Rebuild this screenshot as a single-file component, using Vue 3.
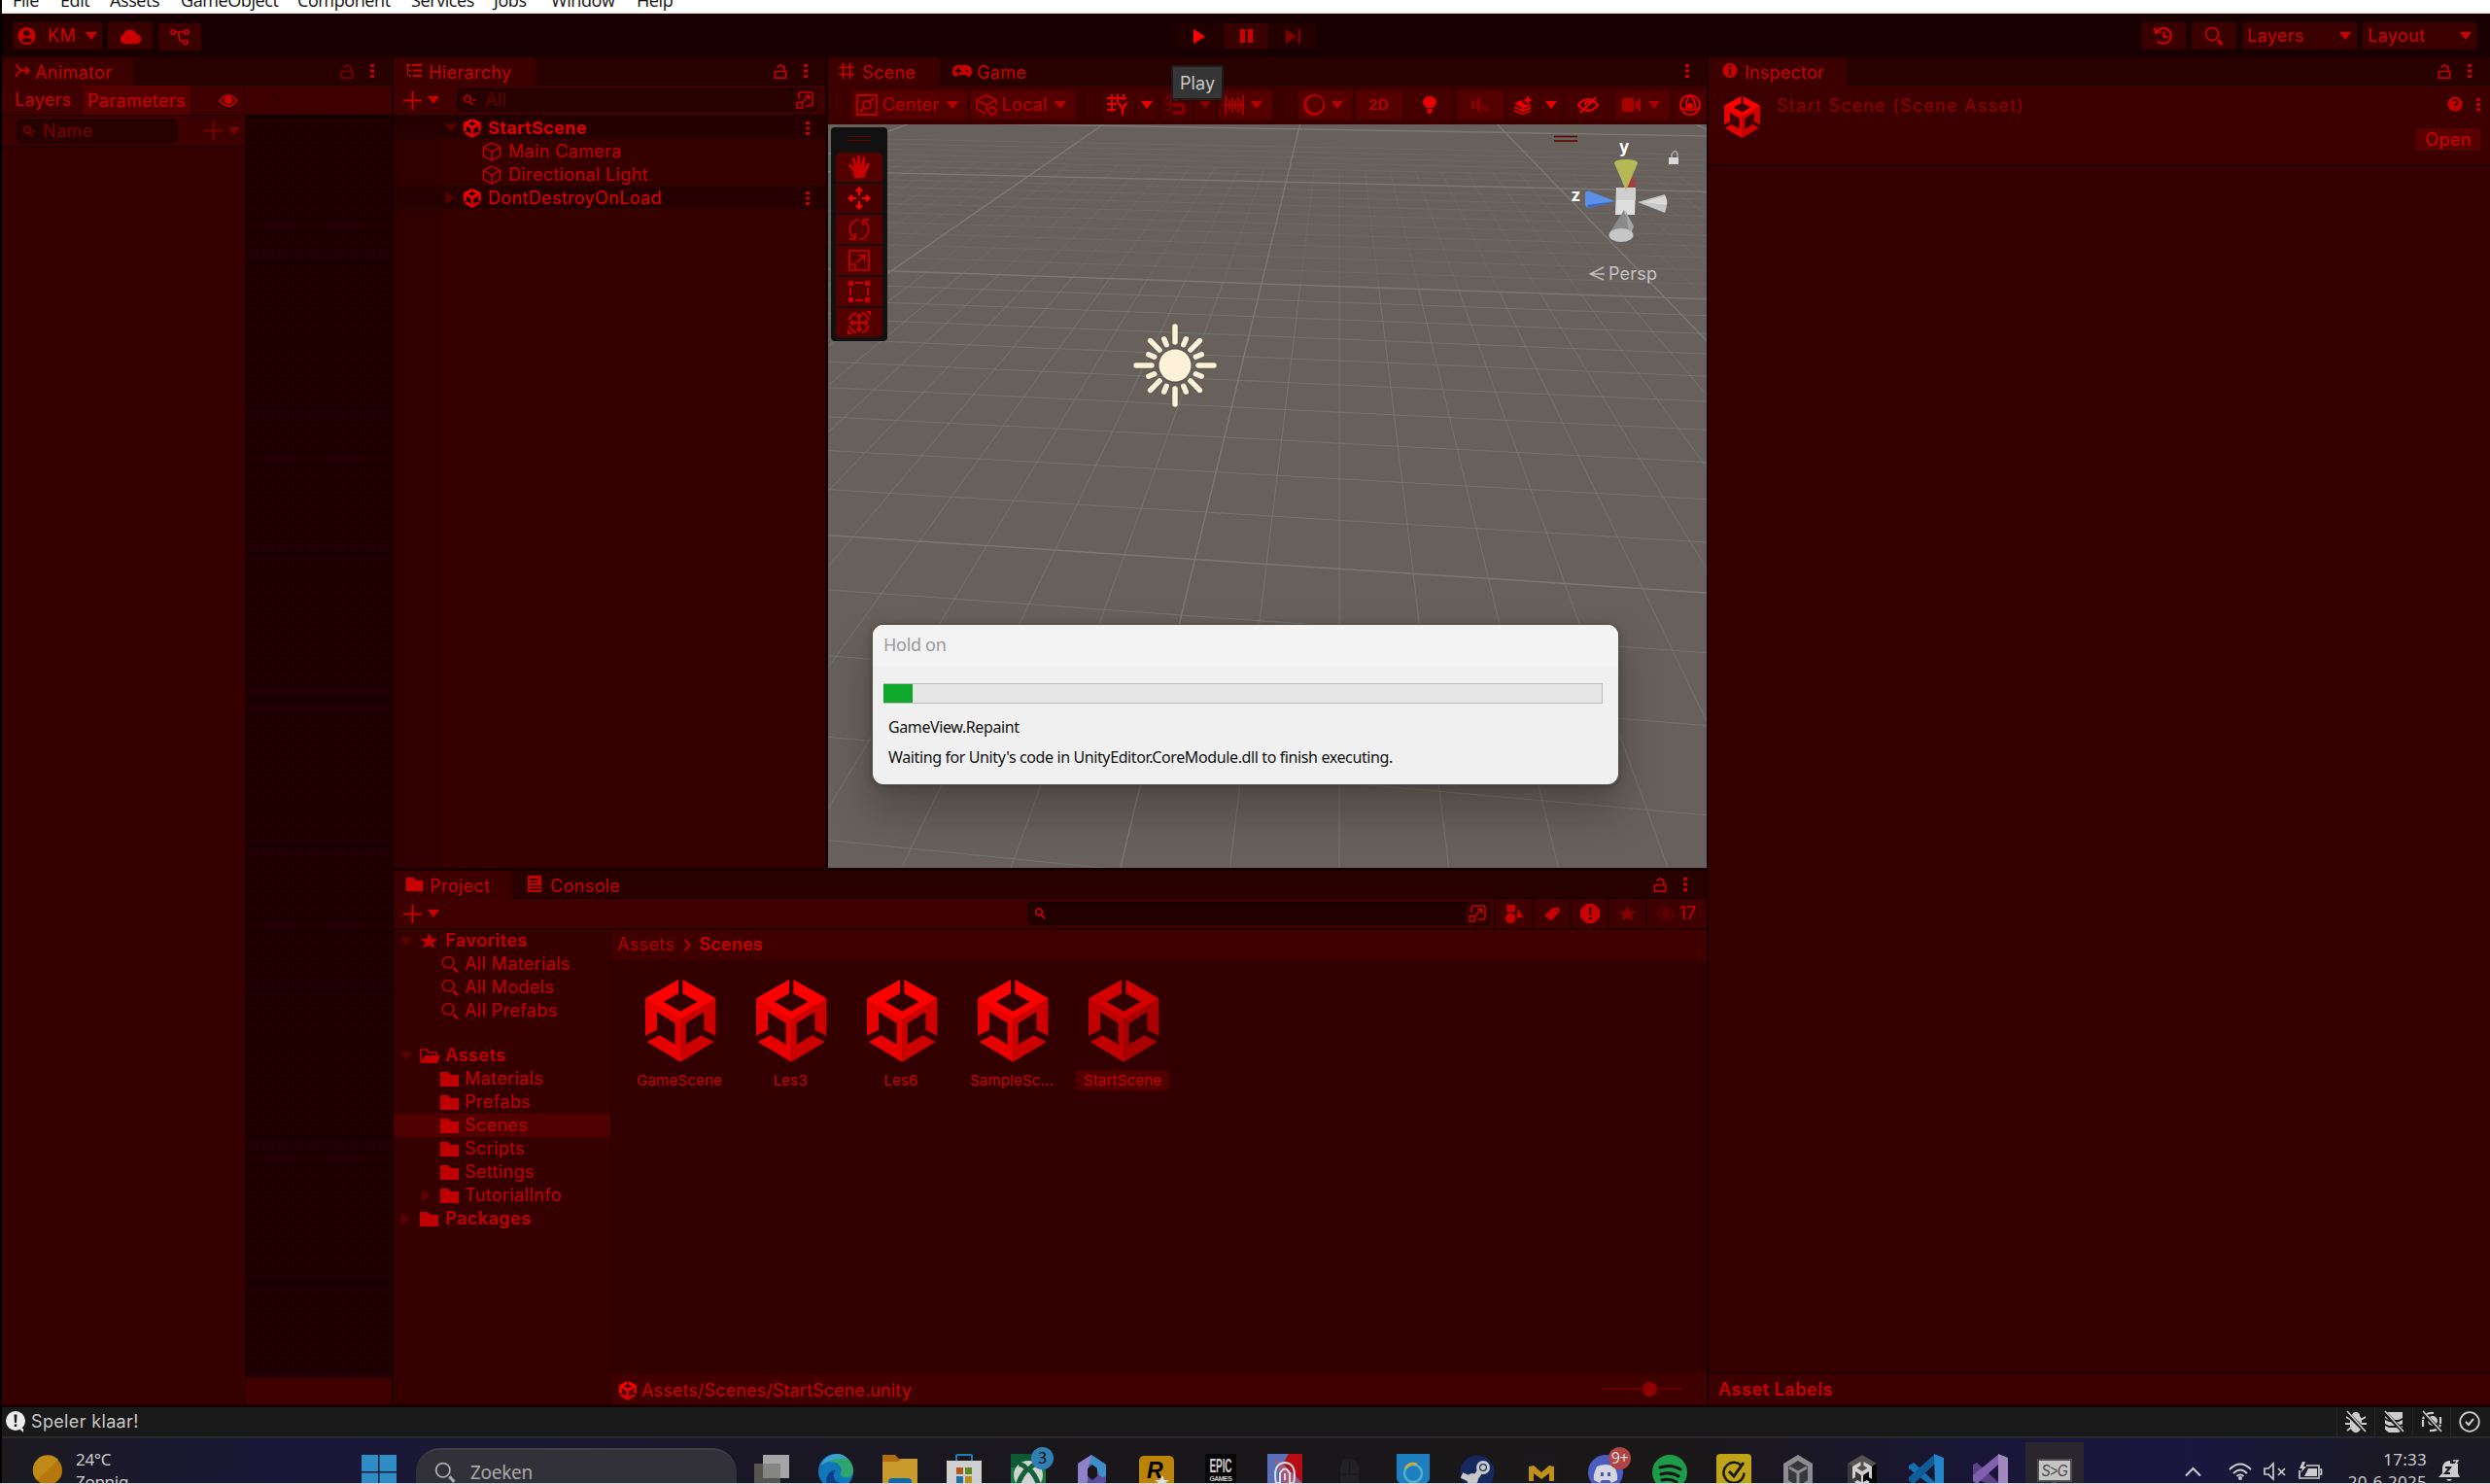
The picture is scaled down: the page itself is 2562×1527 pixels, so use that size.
<script setup>
import { h } from 'vue'

/* name: [viewBox width, viewBox height, markup] */
const S = 'fill="none" stroke="currentColor"'
const F = 'fill="currentColor"'
const icons = {
  arrow: [12, 8, `<path ${F} d="M0 0h12L6 8z"/>`],
  right: [8, 12, `<path ${F} d="M0 0v12l8-6z"/>`],
  user: [20, 20, `<circle ${F} cx="10" cy="10" r="9.5"/><circle cx="10" cy="7" r="3.4" fill="#3c0000"/><path d="M4 15a6.5 4.5 0 0 1 12 0l-3 2H7z" fill="#3c0000"/>`],
  cloud: [22, 16, `<path ${F} d="M5 16a5 5 0 0 1-1-9.6A7 6 0 0 1 17.500 6 5 5 0 0 1 17 16z"/>`],
  branch: [20, 17, `<g ${S} stroke-width="1.6"><circle cx="3" cy="3" r="2.2"/><circle cx="17" cy="3" r="2.200"/><circle cx="16" cy="13.500" r="2.200"/><path d="M5 3h10M9 3c0 6 0 10 5 10"/></g>`],
  history: [20, 20, `<g ${S} stroke-width="2.300"><path d="M3.500 5A8 8 0 1 1 4 15.500"/><path d="M10.500 5.500V11h4"/></g><path ${F} d="M0 1l1 7 7-1z"/>`],
  search: [20, 20, `<circle ${S} stroke-width="1.6" cx="8" cy="8" r="6.500"/><path ${S} stroke-width="3" d="M14 14l4.500 5"/>`],
  find: [14, 12, `<circle ${S} stroke-width="1.7" cx="5" cy="4.500" r="3.300"/><path ${S} stroke-width="2" d="M7 7l4 4"/>`],
  finddd: [16, 12, `<circle ${S} stroke-width="1.7" cx="5" cy="4.500" r="3.300"/><path ${S} stroke-width="2" d="M7 7l3 4"/><path ${F} d="M10 5h4l-2 2.500z"/>`],
  play: [12, 15, `<path ${F} d="M0 0v15l12-7.500z"/>`],
  pause: [13, 14, `<path ${F} d="M0 0h5v14H0zM8 0h5v14H8z"/>`],
  step: [15, 15, `<path ${F} d="M0 0v15l11-7.500zM12.500 0H15v15h-2.500z"/>`],
  anim: [16, 15, `<path ${S} stroke-width="1.800" d="M2 1l1 3 4 3.500h8M1 14l2-3.500 4-3M11 4l4 3.500-4 3.500"/>`],
  lock: [14, 16, `<path ${S} stroke-width="1.800" d="M1 8h12v7H1zM4 4V3l3-2 4 2v5"/>`],
  dots: [4, 16, `<path ${F} d="M0 1h4v3H0zM0 6.500h4v3H0zM0 12h4v3H0z"/>`],
  list: [16, 13, `<path ${F} d="M0 0h4v2H0zM6 0h10v2H6zM3 5.500h2v2H3zM7 5.500h9v2H7zM3 11h2v2H3zM7 11h9v2H7zM1 2h1v10H1z"/>`],
  plus: [19, 19, `<path ${F} d="M8.500 0h2v8.500H19v2h-8.500V19h-2v-8.500H0v-2h8.500z"/>`],
  eye: [20, 13, `<path ${S} stroke-width="1.600" d="M1 6.500q9-11.500 18 0q-9 11.500-18 0z"/><circle ${F} cx="10" cy="6" r="4.300"/>`],
  pick: [18, 18, `<path ${S} stroke-width="1.500" d="M3 8V3q0-2 2-2h10q2 0 2 2v10q0 2-2 2h-5M1 11.500h5.500V17H1zM7 11l6-6M9 4.500h4.500V9"/>`],
  cube: [20, 20, `<path ${S} stroke-width="1.400" d="M10 1l8.500 4.500v9L10 19l-8.500-4.500v-9zM1.500 5.500L10 10l8.500-4.500M10 10v9"/>`],
  hash: [16, 16, `<path ${S} stroke-width="1.700" d="M4.500 0v16M11.500 0v16M0 4.500h16M0 11.500h16"/>`],
  pad: [20, 12, `<path fill-rule="evenodd" ${F} d="M5 0h10a5 6 0 0 1 5 6c0 7-4 7-6 4H6c-2 3-6 3-6-4a5 6 0 0 1 5-6zM5 3v2H3v2h2v2h2V7h2V5H7V3zM14 5v2h2V5z"/>`],
  center: [22, 22, `<g ${S} stroke-width="1.800"><path d="M1 1h20v20H1zM4 18l4-4M14 8l4-4"/><circle cx="11" cy="11" r="4"/></g>`],
  local: [22, 22, `<g ${S} stroke-width="1.600"><path d="M10 20l-9-5V6l10-5 10 5v5M1 6l10 5 10-5M11 11v6"/><circle cx="17" cy="17" r="3.800" stroke-width="2"/></g>`],
  gridy: [22, 22, `<path ${S} stroke-width="1.800" d="M5 0v18M11 0v9M17 0v6M0 4h20M0 10h10M0 16h9"/><path ${S} stroke-width="2.500" d="M12 9l4 6 4-6M16 15v6"/>`],
  snap: [22, 22, `<path ${S} stroke-width="1.500" stroke-dasharray="4 2" d="M5 0v18M11 0v8M17 0v6M0 4h20M0 10h8M0 16h6"/><path ${S} stroke-width="4" d="M8 11h8q3 0 3 4t-3 4H8"/>`],
  ruler: [20, 20, `<path ${S} stroke-width="1.500" d="M1 0v20M5 5v10M8 2v16M11 5v10M14 2v16M16.500 5v10M19 0v20M0 10h20"/>`],
  sphere: [22, 22, `<path fill-rule="evenodd" ${F} d="M11 0a11 11 0 1 0 .1 0zM12 1.800a8.500 8.500 0 1 1-.1 0z"/>`],
  bulb: [14, 18, `<path ${F} d="M4 12Q0 9 0 6a7 6 0 0 1 14 0q0 3-4 6zM4.500 13h5v4l-2.500 1-2.500-1z"/>`],
  mute: [18, 16, `<path ${F} d="M0 4h3v8H0zM5 3l4-3v16l-4-4z"/><path ${S} stroke-width="1.500" d="M11 8l6 7M17 8l-6 7"/>`],
  fx: [20, 20, `<path ${F} d="M15 0l1.500 3.500L20 5l-3.500 1.500L15 10l-1.500-3.500L10 5l3.500-1.500zM1 8l8-3 2 4 8 1-9 4zM1 11l9 4 8-3v2l-8 3.500L1 13zM1 15l9 3.500 8-3v1.500L10 20 1 17z"/>`],
  hide: [22, 18, `<path ${S} stroke-width="2" d="M1 9q10-12 20 0q-10 12-20 0zM3 17L19 1M8 9a3 3 0 0 1 6-1"/>`],
  cam: [20, 14, `<path ${F} d="M0 0h12v14H0zM13.500 4L19 0v14l-5.500-4z"/>`],
  globe: [22, 22, `<g ${S} stroke-width="1.700"><circle cx="11" cy="11" r="10"/><path d="M11 1q-5 5-4 14M11 1q6 5 5 14M1 14q10 5 20 0"/></g><circle ${F} cx="11" cy="12" r="3"/>`],
  info: [18, 18, `<circle ${F} cx="9" cy="9" r="8.500"/><path d="M7.800 3h2.500v2.500H7.800zM7 7.500h3.300V15H7.800V9H7z" fill="#3c0000"/>`],
  help: [16, 16, `<circle ${F} cx="8" cy="8" r="7.500"/><path d="M5.500 6a2.500 2.500 0 1 1 3.500 2.500q-1 .5-1 1.500M8 11.500v2" fill="none" stroke="#3c0000" stroke-width="1.800"/>`],
  folder: [19, 15, `<path ${F} d="M1 0h7l3 3h7q1 0 1 1v10q0 1-1 1H1q-1 0-1-1V1q0-1 1-1z"/>`],
  folderopen: [21, 15, `<path ${S} stroke-width="1.600" d="M1 14V1h6l2.500 3H17v3"/><path ${F} d="M5 7h16l-3 8H1z"/>`],
  doc: [16, 17, `<path fill-rule="evenodd" ${F} d="M1 0h14v17H1zM3 3v1.500h9V3zm0 3.500V8h8V6.500zM3 10v1.500h11V10zm0 3.500V15h11v-1.500z"/>`],
  star: [19, 17, `<path ${F} d="M9.500 0l2.700 6H19l-5.200 4.500 2 6.500-6.300-4-6.300 4 2-6.500L0 6h6.800z"/>`],
  shapes: [20, 20, `<path ${F} d="M2 0h9v8H2zM14 4l6 10h-7z"/><circle ${F} cx="6" cy="14.500" r="5.500"/>`],
  tag: [18, 16, `<path fill-rule="evenodd" ${F} d="M9 1l8-1 1 5-10 11-8-6zM13 3v2h2V3z"/>`],
  alert: [20, 20, `<path ${F} d="M6 0h8l6 6v8l-6 6H6l-6-6V6z"/><path fill="#280000" d="M9 3.500h2.500L11 12H9.500zM9 14h2.500v2.500H9z"/>`],
  bubble: [20, 22, `<path ${F} d="M10 0a10 10 0 1 1 0 20 10 10 0 0 1 0-20zM13 17l5 1v4z"/><path fill="#191919" d="M8.500 3.500h3L11 12H9zM8.700 13.500h2.600V16H8.700z"/>`],
  chev: [8, 13, `<path ${S} stroke-width="2" d="M1 1l5 5.500L1 12"/>`],
  hand: [22, 24, `<path ${F} d="M6 23L5 17 0 10q1-2 3 0l3 3L4 3q1-2 2.500 0L9 10V1q1.500-2 3 0l.5 9L15 2q1.500-1.500 2.500.5L16 12l4-4q2-1 2 .5L18 18l-2 5z"/>`],
  move: [24, 24, `<path ${S} stroke-width="2" d="M12 9V2M9 5l3-3.500L15 5M12 15v7M9 19l3 3.500 3-3.500M9 12H2M5 9l-3.500 3L5 15M15 12h7M19 9l3.500 3-3.500 3"/>`],
  rotate: [22, 22, `<path ${S} stroke-width="1.600" d="M7 20A10 10 0 0 1 11 1M11 21A10 10 0 0 0 16 2.500M1 21h6v-6M21 1h-6v6"/>`],
  scale: [22, 22, `<path ${S} stroke-width="1.700" d="M1 1h20v20H1zM1 15h6v6M9 13l7-7M10 5.500h6.500V12"/>`],
  rect: [22, 22, `<path ${F} d="M0 0h5v5H0zM17 0h5v5h-5zM0 17h5v5H0zM17 17h5v5h-5zM7 1h8v2H7zM7 19h8v2H7zM1 7h2v8H1zM19 7h2v8h-2z"/>`],
  combo: [24, 24, `<path ${S} stroke-width="1.800" d="M12 4v16M4 12h16M9.500 6L12 3.500 14.500 6M9.500 18l2.500 2.500 2.500-2.500M6 9.500L3.500 12 6 14.500M18 9.500l2.500 2.500-2.500 2.500M2 9q2-6 7-7M15 2q5 1 7 7M22 15q-2 6-7 7M9 22q-5-1-7-7"/><path ${F} d="M19 0h5v5zM0 19v5h5z"/>`],
  bug: [22, 22, `<path ${F} d="M7 5a4 4 0 0 1 8 0l2 3v8q-2 6-6 6t-6-6V8z"/><path ${S} stroke-width="2" d="M1 6l5 3M21 6l-5 3M0 13h22M2 20l4-3M20 20l-4-3"/><path d="M1 1l20 20" stroke="#191919" stroke-width="4"/><path ${S} stroke-width="1.600" d="M2 0l19 21"/>`],
  stack: [22, 22, `<path ${F} d="M2 1h18v6l-4 2H6L2 7zM2 9l4 2h10l4-2v4l-4 2H6l-4-2zM2 15l4 2h10l4-2v4l-4 3H6l-4-3z"/><path d="M1 1l20 20" stroke="#191919" stroke-width="4"/><path ${S} stroke-width="1.600" d="M2 0l19 21"/>`],
  auto: [22, 22, `<path ${S} stroke-width="2.200" d="M2 8q3-7 11-6M20 14q-3 7-11 6M2 16V9M20 6v7"/><circle ${F} cx="12" cy="10" r="5"/><path d="M1 1l20 20" stroke="#191919" stroke-width="4"/><path ${S} stroke-width="1.600" d="M2 0l19 21"/>`],
  ok: [22, 22, `<circle ${S} stroke-width="1.800" cx="11" cy="11" r="9.800"/><path ${S} stroke-width="2" d="M7 11l3 3 5-6"/>`],
  /* taskbar */
  weather: [32, 32, `<circle cx="16" cy="16" r="15" fill="#b8770c"/><path d="M5 26A15 15 0 0 1 27 5z" fill="#c08a18"/>`],
  win: [36, 36, `<path fill="#2f8cc4" d="M0 0h17v17H0zM18.500 0H36v17H18.500zM0 18.500h17V36H0zM18.500 18.500H36V36H18.500z"/>`],
  views: [36, 34, `<path fill="#a5a5a5" d="M9 1h27v24H9z"/><path fill="#55544f" d="M0 10h27v24H0z"/><path fill="#858583" d="M9 10h18v15H9z"/>`],
  edge: [36, 36, `<circle cx="18" cy="18" r="18" fill="#1277b8"/><path fill="#2ea56f" d="M18 0a18 18 0 0 1 18 18q-1 8-10 6q-6-2-2-7-1-9-13-9z"/><path fill="#3d9fd0" d="M2 12Q8 0 20 0q8 1 10 6Q20 2 10 8z"/><path fill="#0b3f86" d="M10 36Q4 20 18 16q-6 10 4 14l6 6z"/>`],
  files: [36, 34, `<path fill="#b36a10" d="M0 1h13l4 4h19v10H0z"/><path fill="#c99a2c" d="M0 8h16l4-3h16v29H0z"/><path fill="#0d6aa8" d="M6 34v-5q0-4 4-4h16q4 0 4 4v5z"/>`],
  store: [36, 36, `<path d="M10 8V2q0-1 1-1h14q1 0 1 1v6" fill="none" stroke="#1b80b8" stroke-width="2"/><path fill="#cfcfcf" d="M0 7h36v29H0z"/><path fill="#b5561c" d="M10 14h7v7h-7z"/><path fill="#5e8a24" d="M19 14h7v7h-7z"/><path fill="#1b72a8" d="M10 23h7v7h-7z"/><path fill="#c28c14" d="M19 23h7v7h-7z"/>`],
  xbox: [36, 36, `<path fill="#0d5a34" d="M0 0h36v36H0z"/><path fill="#1b7a40" d="M0 14h36v22H0z"/><circle cx="18" cy="22" r="15" fill="#d0d4d0"/><path d="M6 36Q10 22 17 16 12 10 8 11M30 36Q26 22 19 16q4-6 9-5" fill="none" stroke="#14603a" stroke-width="5"/>`],
  copilot: [36, 36, `<path fill="#5b4d9c" d="M3 10L17 1l15 10v18L18 36 3 30z"/><path fill="#3c8fc8" d="M17 1l15 10v12q-6 3-8-4L13 8z"/><path fill="#8f82c8" d="M3 10L17 1l-3 13-1 14-3 7-7-5z"/><path d="M18 11l5 4v8l-5 4-5-4v-8z" fill="#1a1719"/>`],
  rock: [36, 36, `<rect width="36" height="44" y="2" rx="5" fill="#b98409"/><text x="8" y="25" font-family="Liberation Sans" font-style="italic" font-weight="700" font-size="23">R</text><path fill="#ddd" d="M24 22l2 5h5l-4 3 2 6-5-3-5 3 1-6-4-3h5z"/>`],
  epic: [36, 36, `<path fill="#050505" d="M2 0h32v36H2z"/><text x="18" y="19" text-anchor="middle" fill="#ccc" font-family="Liberation Sans" font-weight="700" font-size="20" textLength="23" lengthAdjust="spacingAndGlyphs">EPIC</text><text x="18" y="28" text-anchor="middle" fill="#ccc" font-family="Liberation Sans" font-weight="700" font-size="7" textLength="23">GAMES</text>`],
  print: [36, 36, `<path fill="#5b6eb8" d="M0 0h36v36H0z"/><path fill="#b80c14" d="M22 0h14v30L16 10z"/><path fill="#a85878" d="M8 4l28 28v4H18z"/><g fill="none" stroke="#ddd" stroke-width="2"><path d="M9 30q-4-20 9-21 13 1 9 21M13 30V20q5-9 10 0v10M18 20v7M9 30h5M22 30h5"/></g>`],
  mouse: [36, 36, `<rect x="9" y="5" width="19" height="40" rx="9" fill="#222125"/><path d="M18.500 5v16M9 21h19" stroke="#19181b"/>`],
  shield: [36, 36, `<path fill="#1d7fc0" d="M1 0h34v26q-4 8-17 12Q5 34 1 26z"/><circle cx="18" cy="20" r="9" fill="none" stroke="#55b0c8" stroke-width="2.500"/><path d="M10 15q4-7 12-4" fill="none" stroke="#d4a83a" stroke-width="2.500"/>`],
  steam: [36, 36, `<circle cx="18" cy="19" r="17.500" fill="#142a5e"/><path d="M23 14L18 22l-5 5L2 22" fill="none" stroke="#c8c8c8" stroke-width="6"/><g fill="#c8c8c8"><circle cx="24" cy="14" r="7"/><circle cx="13" cy="26" r="6"/></g><circle cx="24" cy="14" r="4" fill="#142a5e"/><circle cx="24" cy="14" r="2.800" fill="#c8c8c8"/>`],
  mail: [36, 36, `<rect width="36" height="44" rx="6" fill="#19181a"/><path fill="#c0901c" d="M5 28V13l5-1 8 7 8-7 5 1v15h-5v-8l-8 6-8-6v8z"/>`],
  discord: [36, 36, `<circle cx="18" cy="19" r="18" fill="#4a5cc0"/><path fill="#d5d5df" fill-rule="evenodd" d="M9 13q9-4 18 0 4 8 3 14l-6 3-2-3h-8l-2 3-6-3q-1-6 3-14zM13 19v4h3v-4zM20 19v4h3v-4z"/>`],
  spotify: [36, 36, `<circle cx="18" cy="19" r="18" fill="#1c9c46"/><g fill="none" stroke="#151515" stroke-width="3" stroke-linecap="round"><path d="M8 14q12-4 21 2M9 21q10-3 18 2M10 27q8-2 15 2"/></g>`],
  norton: [36, 36, `<rect width="36" height="44" rx="4" fill="#c0a418"/><path d="M25 11.500a10.500 10.500 0 1 0 3.500 8" fill="none" stroke="#18170f" stroke-width="2.500"/><path d="M13 18l5 5L28 9" fill="none" stroke="#18170f" stroke-width="3"/>`],
  hub: [36, 36, `<path fill="#8c8c90" d="M18 1l15 9v22l-15 9-15-9V10z"/><path fill="#39383c" d="M18 7l10 6v14l-10 7-10-7V13z"/><path fill="none" stroke="#8c8c90" stroke-width="3" d="M9 14l9 5 9-5M18 19v14"/>`],
  unitydark: [36, 36, `<path fill="#55524f" d="M18 1l15 9-15 9-15-9z"/><path fill="#3c3a3a" d="M3 10l15 9v22L3 32z"/><path fill="#050505" d="M33 10l-15 9v22l15-9z"/><path fill="#d0d0d0" fill-rule="evenodd" d="M16.500 8L8 13v13l3-2v-6l6 4v7l-4-2-3 2 8 5 8-5-3-2-4 2v-7l6-4v6l3 2V13l-8.500-5v4l4 2.500L18 18l-5.500-3.500 4-2.500z"/>`],
  vscode: [36, 36, `<path fill="#1471b0" d="M0 12l5-3 22 20v7L0 15z"/><path fill="#0e5c98" d="M0 28l5 3L27 10V0L0 24z"/><path fill="#2484c8" d="M26 0l10 4v32H27z"/>`],
  vs: [36, 36, `<path fill="#5c4384" d="M0 11l4-2 22 20v7L0 24z"/><path fill="#8160ae" d="M0 28l4 3L27 10V0L0 22z"/><path fill="#a088bc" d="M26 0l10 4v32H26z"/>`],
  sg: [36, 32, `<path fill="#4d4d4f" d="M0 2h36v24H0zM15 26h5v6h-5zM12 30h12v2H12z"/><path fill="#c4c4c4" d="M2 4h32v20H2z"/><text x="18" y="20" text-anchor="middle" font-family="Liberation Sans" font-style="italic" font-size="16" fill="#444" textLength="27" lengthAdjust="spacingAndGlyphs">S&gt;G</text>`],
  up: [17, 9, `<path ${S} stroke-width="2" d="M1 8.500l7.500-7.500L16 8.500"/>`],
  wifi: [24, 18, `<g ${S} stroke-width="2"><path d="M1 7q11-11 22 0M5 11q7-7 14 0M8.500 14q3.500-3 7 0"/></g><circle ${F} cx="12" cy="16" r="2"/>`],
  vol: [24, 18, `<path ${S} stroke-width="1.700" d="M1 6h4l5-5v16l-5-5H1zM15 6l7 7M22 6l-7 7"/>`],
  batt: [24, 20, `<path ${S} stroke-width="1.700" d="M8 4h13v13H1v-8M22 8h1.500v5H22"/><path ${F} d="M10 7h9v8H6zM4 0L1 7h3l-2 5 6-7H5l2-5z"/>`],
  bell: [22, 24, `<path ${F} d="M4 8q1-7 8-7v3h8v10l2 4H0l4-4zM8 20h6q-3 4-6 0z"/><path d="M7 8h5l-5 6h5" fill="none" stroke="#18152a" stroke-width="2"/><path ${S} stroke-width="1.500" d="M15 1h5l-5 6h5"/>`],
}
const Icon = ({ n, w, h: ht }) => {
  const [vw, vh, html] = icons[n]
  return h('svg', { viewBox: `0 0 ${vw} ${vh}`, width: w || vw, height: ht || vh, class: 'ico', innerHTML: html })
}
Icon.props = ['n', 'w', 'h']

const Unity = ({ w = 72.4, hgt = 84.7, dim }) =>
  h('svg', {
    viewBox: '0 0 72.4 84.7', width: w, height: hgt, preserveAspectRatio: 'none', class: 'ico',
    innerHTML:
      `<path fill="${dim ? '#be0000' : '#e60000'}" d="M0 19.300V57.700L12 51.700V33.300L30.700 45V66.700L14.800 57.300 1.600 64 36.200 84.700V36z"/>` +
      `<path fill="${dim ? '#a80000' : '#cd0000'}" d="M72.400 19.300V57.700L60.400 51.700V33.300L41.700 45V66.700L57.600 57.300 70.800 64 36.200 84.700V36z"/>` +
      `<path fill="${dim ? '#d20000' : '#ff0000'}" d="M34 0L0 19.300 36.200 40.500 72.400 19.300 38.400 0V14.300L53.700 22.700 36.200 32.700 18.700 22.700 34 14.300z"/>`,
  })
Unity.props = ['w', 'hgt', 'dim']

const menus = ['File', 'Edit', 'Assets', 'GameObject', 'Component', 'Services', 'Jobs', 'Window', 'Help']
const tools = ['hand', 'move', 'rotate', 'scale', 'rect', 'combo']
const favorites = ['All Materials', 'All Models', 'All Prefabs']
const folders = ['Materials', 'Prefabs', 'Scenes', 'Scripts', 'Settings', 'TutorialInfo']
const scenes = ['GameScene', 'Les3', 'Les6', 'SampleSc...', 'StartScene']
const apps = ['views', 'edge', 'files', 'store', 'xbox', 'copilot', 'rock', 'epic', 'print', 'mouse', 'shield',
  'steam', 'mail', 'discord', 'spotify', 'norton', 'hub', 'unitydark', 'vscode', 'vs', 'sg']
const badges = { xbox: '3', discord: '9+' }

/* ground plane grid: (i, j) in units of ten cells -> viewport pixels */
const project = (i, j) => {
  const d = 1 - 0.0427 * i - 0.4606 * j
  return [((378.2 * i - 243.3 * j + 448) / d - 2).toFixed(1), ((6.56 * i + 76 * j + 167) / d - 3).toFixed(1)]
}
const seg = (a, b) => `M${project(...a)}L${project(...b)}`
const major = [], far = [], near = []
for (let k = -50; k <= 50; k++) {
  const t = k / 10
  const isMajor = k % 10 === 0
  if (isMajor) major.push(seg([t, -3], [t, 1.5]))
  else { far.push(seg([t, -1.2], [t, 0])); near.push(seg([t, 0], [t, 1.5])) }
  if (k >= -30 && k <= 15) {
    if (isMajor) major.push(seg([-5, t], [5, t]))
    else if (k > 0) near.push(seg([-5, t], [5, t]))
    else if (k > -17) far.push(seg([-5, t], [5, t]))
  }
}
const rays = Array.from({ length: 16 }, (_, k) => ({ a: k * 22.5, y1: k % 4 === 0 ? -40 : k % 2 === 0 ? -36 : -29.500, y2: k % 4 === 0 ? -24 : k % 2 === 0 ? -22.500 : -23 }))
</script>

<template>
  <div class="screen">
    <nav class="menubar"><span v-for="(m, k) in menus" :key="m" :class="'m' + k">{{ m }}</span></nav>

    <header class="toolbar">
      <div class="btn km"><Icon n="user" w="19" /><span>KM</span><Icon n="arrow" /></div>
      <div class="btn cl"><Icon n="cloud" /></div>
      <div class="btn vc"><Icon n="branch" /></div>
      <div class="btn pl"><Icon n="play" /></div>
      <div class="btn pa"><Icon n="pause" /></div>
      <div class="btn st"><Icon n="step" /></div>
      <div class="btn hi"><Icon n="history" /></div>
      <div class="btn se"><Icon n="search" /></div>
      <div class="btn dd"><span>Layers</span><Icon n="arrow" /></div>
      <div class="btn dd"><span>Layout</span><Icon n="arrow" /></div>
    </header>

    <main class="work">
      <section class="panel animator">
        <div class="tabs">
          <div class="tab"><Icon n="anim" /><span>Animator</span></div>
          <div class="ctl faint"><Icon n="lock" h="15" /></div><div class="ctl"><Icon n="dots" /></div>
        </div>
        <div class="bar anibar">
          <span class="lay">Layers</span><span class="par">Parameters</span>
          <span class="eye"><Icon n="eye" /></span>
          <span class="crumb"><svg width="40" height="30" viewBox="0 0 40 30"><path d="M22 0l13 15-13 15" fill="none" stroke="#2c0000" stroke-width="1.500" /></svg></span>
        </div>
        <div class="anibody">
          <div class="anileft">
            <div class="namerow"><div class="field"><Icon n="finddd" /><span>Name</span></div><Icon n="plus" /><Icon n="arrow" /></div>
          </div>
          <div class="aniright"><div class="grid"></div><div class="gridfoot"></div></div>
        </div>
      </section>

      <div class="middle">
        <div class="upper">
          <section class="panel hierarchy">
            <div class="tabs">
              <div class="tab"><Icon n="list" /><span>Hierarchy</span></div>
              <div class="ctl"><Icon n="lock" h="15" /></div><div class="ctl"><Icon n="dots" /></div>
            </div>
            <div class="bar hibar">
              <Icon n="plus" /><Icon n="arrow" />
              <div class="field"><Icon n="finddd" /><span>All</span><b><Icon n="pick" /></b></div>
            </div>
            <div class="tree">
              <div class="row scene"><i><Icon n="arrow" h="11" /></i><Unity w="18" hgt="20" /><b>StartScene</b><Icon n="dots" /></div>
              <div class="row obj"><Icon n="cube" /><span>Main Camera</span></div>
              <div class="row obj"><Icon n="cube" /><span>Directional Light</span></div>
              <div class="row scene"><i><Icon n="right" w="10" h="13" /></i><Unity w="18" hgt="20" /><span>DontDestroyOnLoad</span><Icon n="dots" /></div>
            </div>
          </section>

          <section class="panel sceneview">
            <div class="tabs">
              <div class="tab"><Icon n="hash" /><span>Scene</span></div>
              <div class="tab idle"><Icon n="pad" /><span>Game</span></div>
              <div class="ctl last"><Icon n="dots" /></div>
            </div>
            <div class="bar scbar">
              <u></u>
              <div class="tb w119"><Icon n="center" /><span>Center</span><Icon n="arrow" /></div>
              <div class="tb w107"><Icon n="local" /><span>Local</span><Icon n="arrow" /></div>
              <u class="u2"></u>
              <div class="tb on w33"><Icon n="gridy" /></div>
              <div class="tb on w20"><Icon n="arrow" /></div>
              <div class="tb on dim w33"><Icon n="snap" /></div>
              <div class="tb on dim w20"><Icon n="arrow" /></div>
              <div class="tb w55"><Icon n="ruler" /><Icon n="arrow" /></div>
              <u class="u3"></u>
              <div class="tb w55"><Icon n="sphere" /><Icon n="arrow" /></div>
              <div class="tb w48"><span class="two">2D</span></div>
              <div class="tb on w48"><Icon n="bulb" /></div>
              <div class="tb mute w48"><Icon n="mute" /></div>
              <div class="tb on w32"><Icon n="fx" /></div>
              <div class="tb on w21"><Icon n="arrow" /></div>
              <div class="tb on w47"><Icon n="hide" /></div>
              <div class="tb cam w56"><Icon n="cam" /><Icon n="arrow" /></div>
              <div class="tb on globe"><Icon n="globe" /></div>
            </div>
            <div class="viewport">
              <svg class="ground" width="904" height="765" viewBox="0 0 904 765">
                <g fill="none" stroke="#777b7c">
                  <path :d="far.join('')" opacity=".32" />
                  <path :d="near.join('')" opacity=".75" />
                  <path :d="major.join('')" stroke="#7d7c7b" stroke-width="1.500" opacity=".85" />
                </g>
                <g transform="translate(357 248)">
                  <circle r="18" fill="#575048" opacity=".5" />
                  <g stroke="#555049" stroke-width="7.500" stroke-linecap="round" opacity=".4"><line v-for="r in rays" :key="r.a" :y1="r.y1" :y2="r.y2" :transform="`rotate(${r.a})`" /></g>
                  <circle r="16.500" fill="#fdf2d8" />
                  <g stroke="#fdf2d8" stroke-width="5.500" stroke-linecap="round"><line v-for="r in rays" :key="r.a" :y1="r.y1" :y2="r.y2" :transform="`rotate(${r.a})`" /></g>
                </g>
                <g transform="translate(708 -8)">
                  <path d="M39 20.500h24M39 25h24" stroke="#5a0000" stroke-width="1.500" />
                  <path d="M160 42v-3q4-7 6 0v4" fill="none" stroke="#aaa" stroke-width="1.500" /><path d="M157 42h10v7h-10z" fill="#d8d8d8" />
                  <ellipse cx="118" cy="68" rx="5" ry="6" fill="#a63d3d" />
                  <path d="M103 73h20l-1 28h-20z" fill="#dedede" /><path d="M104 73h19v13h-20z" fill="#cfcfcf" />
                  <path d="M101 48q0-4 12-4t12 4l-12 28z" fill="#b5b856" />
                  <path d="M71 78q1-2 5-1l26 10-27 7q-3 0-4-3z" fill="#5a90e8" /><path d="M73 91l29-4-27 7z" fill="#3d68c0" />
                  <path d="M125 88l28-8q4 8 0 19z" fill="#c6c6c6" /><path d="M130 88l23-6q3 4 2 9z" fill="#dadada" />
                  <path d="M111 96l-15 24 24 4z" fill="#8a8a8a" /><path d="M112 96l9 17-4 10z" fill="#a5a5a5" />
                  <ellipse cx="108" cy="122" rx="12.500" ry="7" fill="#c6c6c6" />
                  <path d="M90 155l-14 7 14 6M76 162h15" fill="none" stroke="#bdbdbd" stroke-width="1.400" />
                  <text x="106" y="37" class="ax">y</text><text x="56.500" y="87" class="ax">z</text>
                  <text x="95" y="168" class="persp">Persp</text>
                </g>
              </svg>
              <div class="tools"><s></s><div v-for="t in tools" :key="t" class="tool" :class="'t-' + t"><Icon :n="t" /></div></div>
            </div>
          </section>
        </div>

        <section class="panel project">
          <div class="tabs">
            <div class="tab"><Icon n="folder" h="14" /><span>Project</span></div>
            <div class="tab idle"><Icon n="doc" /><span>Console</span></div>
            <div class="ctl last2"><Icon n="lock" h="15" /></div><div class="ctl"><Icon n="dots" /></div>
          </div>
          <div class="bar prbar">
            <Icon n="plus" /><Icon n="arrow" />
            <div class="field"><Icon n="find" /><b><Icon n="pick" /></b></div>
            <div class="cell c1"><Icon n="shapes" h="19" /></div>
            <div class="cell"><Icon n="tag" w="16" h="15" /></div>
            <div class="cell"><Icon n="alert" /></div>
            <div class="cell dim"><Icon n="star" h="16" /></div>
            <div class="cell c5"><Icon n="eye" /><span>17</span></div>
          </div>
          <div class="prbody">
            <aside>
              <div class="node l0"><i><Icon n="arrow" h="11" /></i><em><Icon n="star" h="16" /></em><b>Favorites</b></div>
              <div v-for="f in favorites" :key="f" class="node l1"><i></i><em><Icon n="search" h="18" /></em>{{ f }}</div>
              <div class="node l0 gap"><i><Icon n="arrow" h="11" /></i><em><Icon n="folderopen" /></em><b>Assets</b></div>
              <div v-for="f in folders" :key="f" class="node l1" :class="{ sel: f === 'Scenes' }"><i><Icon v-if="f === 'TutorialInfo'" n="right" w="10" h="13" /></i><em><Icon n="folder" /></em>{{ f }}</div>
              <div class="node l0"><i><Icon n="right" w="10" h="13" /></i><em><Icon n="folder" /></em><b>Packages</b></div>
            </aside>
            <div class="content">
              <div class="path"><span>Assets</span><Icon n="chev" w="9" /><b>Scenes</b></div>
              <div class="assets">
                <div v-for="s in scenes" :key="s" class="asset" :class="{ sel: s === 'StartScene' }"><Unity :dim="s === 'StartScene'" /><span>{{ s }}</span></div>
              </div>
              <div class="foot"><Unity w="18" hgt="20" /><span>Assets/Scenes/StartScene.unity</span><div class="slider"><i></i></div></div>
            </div>
          </div>
        </section>
      </div>

      <section class="panel inspector">
        <div class="tabs">
          <div class="tab"><Icon n="info" w="16" h="17" /><span>Inspector</span></div>
          <div class="ctl"><Icon n="lock" h="15" /></div><div class="ctl"><Icon n="dots" /></div>
        </div>
        <div class="head">
          <Unity w="37" hgt="43" /><span class="title">Start Scene (Scene Asset)</span>
          <div class="hr"><div><Icon n="help" /><Icon n="dots" h="15" /></div><button>Open</button></div>
        </div>
        <div class="void"></div>
        <div class="labels">Asset Labels</div>
      </section>
    </main>

    <footer class="status">
      <Icon n="bubble" /><span>Speler klaar!</span>
      <div class="sts"><div v-for="s in ['bug', 'stack', 'auto', 'ok']" :key="s"><Icon :n="s" /></div></div>
    </footer>

    <footer class="taskbar">
      <Icon n="weather" /><div class="wx">24°C<br />Zonnig</div>
      <Icon n="win" />
      <div class="find"><Icon n="search" w="22" h="22" /><span>Zoeken</span></div>
      <div class="apps"><div v-for="a in apps" :key="a" class="app" :class="'app-' + a"><Icon :n="a" /><em v-if="badges[a]">{{ badges[a] }}</em></div></div>
      <div class="tray"><Icon n="up" /><Icon n="wifi" /><Icon n="vol" /><Icon n="batt" /></div>
      <div class="clock">17:33<br />20-6-2025</div>
      <Icon n="bell" />
    </footer>

    <div class="tip">Play</div>

    <div class="dialog">
      <h1>Hold on</h1>
      <div class="dbody"><div class="prog"><i></i></div><p>GameView.Repaint</p><p class="p2">Waiting for Unity's code in UnityEditor.CoreModule.dll to finish executing.</p></div>
    </div>
  </div>
</template>

<style>
body { margin: 0; background: #000; overflow: hidden; }
</style>

<style scoped>
* { box-sizing: border-box; }
.screen { position: relative; width: 2562px; height: 1527px; padding-left: 2px; background: #000; border-bottom: 1px solid #d4d4dc; overflow: hidden; display: flex; flex-direction: column; font: 18px/24px Inter, sans-serif; letter-spacing: .35px; color: #c80000; white-space: nowrap; }
.ico { flex: none; display: block; overflow: visible; }
.menubar { height: 14px; flex: none; background: #fff; border-bottom: 2px solid #eee; display: flex; padding-left: 11px; overflow: hidden; font-family: "Open Sans", sans-serif; font-size: 18px; letter-spacing: -.4px; color: #111; }
.menubar span { line-height: 24px; margin-top: -12px; height: 24px; }
.m0 { width: 49px; } .m1 { width: 51px; } .m2 { width: 73px; } .m3 { width: 120px; } .m4 { width: 117px; } .m5 { width: 85px; } .m6 { width: 59px; } .m7 { width: 88px; }
.toolbar { height: 45px; flex: none; background: #190000; display: flex; padding: 9px 13px 0 11px; }
.btn { height: 28px; background: #3a0000; border-radius: 2px; display: flex; align-items: center; justify-content: center; color: #cd0000; }
.km { width: 92px; gap: 12px; } .km .ico:last-child { margin-left: -2px; }
.cl { width: 46px; margin-left: 6px; } .vc { width: 44px; margin: 1px 0 0 6px; }
.pl { width: 45px; margin: 1px 0 0 1004px; background: #220000; color: #f00; height: 26px; }
.pa { width: 46px; margin: 1px 0 0 3px; height: 26px; } .st { width: 47px; margin: 1px 0 0 2px; background: #240000; color: #800000; height: 26px; }
.hi { width: 46px; margin-left: 849px; } .se { width: 46px; margin-left: 6px; }
.dd { width: 118px; margin-left: 6px; justify-content: space-between; padding: 0 6px 0 5px; }
.work { height: 1389px; flex: none; background: #190000; display: flex; padding-bottom: 3px; }
.panel { display: flex; flex-direction: column; background: #370000; flex: none; }
.tabs { height: 29px; flex: none; background: #280000; border-bottom: 1px solid #190000; border-radius: 4px 4px 0 0; display: flex; align-items: flex-start; }
.tab { height: 29px; background: #3c0000; border-radius: 4px 4px 0 0; display: flex; align-items: center; padding-top: 2px; }
.tab .ico { margin-top: -4px; }
.tab.idle { background: none; }
.ctl { height: 28px; display: flex; align-items: center; margin-left: 17px; }
.tab + .ctl { margin-left: auto; }
.ctl.faint { color: #780000; }
.bar { height: 30px; flex: none; background: #3e0000; display: flex; align-items: center; }
.field { background: #280000; border: 1px solid #190000; border-top-color: #100000; border-radius: 5px; height: 24px; display: flex; align-items: center; }
.animator { width: 401px; margin-right: 2px; }
.animator .tab { width: 135px; padding-left: 13px; gap: 5px; }
.animator .tabs { padding-right: 18px; }
.anibar { border-bottom: 1px solid #190000; height: 31px; }
.lay { padding-left: 13px; width: 82px; } .par { width: 113px; background: #550000; height: 30px; line-height: 31px; padding-left: 5px; border: 1px solid #2a0000; border-width: 0 1px; }
.eye { margin-left: 28px; width: 26px; } .crumb { border-left: 1px solid #2a0000; height: 30px; }
.anibody { flex: 1; display: flex; min-height: 0; }
.anileft { width: 250px; }
.namerow { height: 33px; background: #3c0000; border-bottom: 2px solid #200000; display: flex; align-items: center; padding-left: 15px; color: #780000; }
.namerow .field { width: 165px; gap: 5px; padding-left: 5px; margin-right: 28px; }
.namerow > .ico:last-child { margin-left: 6px; }
.aniright { flex: 1; display: flex; flex-direction: column; border-left: 1px solid #250000; }
.grid { flex: 1; background-color: #200000; background-image: linear-gradient(90deg, #170000 1px, transparent 1px), linear-gradient(#120000 2px, transparent 2px), linear-gradient(#170000 1px, transparent 1px); background-size: 15px 15px, 150px 150px, 15px 15px; }
.gridfoot { height: 27px; background: #400000; }
.middle { width: 1351px; display: flex; flex-direction: column; flex: none; margin-right: 2px; background: #190000; }
.upper { height: 834px; display: flex; flex: none; gap: 3px; margin-bottom: 3px; }
.hierarchy { width: 444px; }
.hierarchy .tab { width: 146px; padding-left: 13px; gap: 7px; }
.hierarchy .tabs { padding-right: 18px; }
.hibar { height: 31px; border-bottom: 1px solid #190000; padding-left: 10px; }
.hibar > .ico + .ico { margin: 0 18px 0 6px; }
.hibar .field { width: 371px; padding-left: 5px; gap: 7px; color: #b00000; }
.hibar .field span { color: #620000; } .field b { margin-left: auto; padding: 0 3px; color: #c80000; border-left: 1px solid #180000; background: #330000; height: 22px; display: flex; align-items: center; border-radius: 0 5px 5px 0; }
.tree { flex: 1; background: linear-gradient(90deg, #300000 49px, #370000 49px); }
.row { height: 24px; display: flex; align-items: center; padding-top: 1px; }
.scene { background: #260000; }
.scene i { width: 19px; margin-left: 53px; color: #5c0000; } .scene > .ico + * { margin-left: 7px; color: #d80000; }
.scene b { font-weight: 700; }
.scene > .ico:last-child { margin: 0 16px 0 auto; color: #c80000; }
.obj { padding-left: 91px; gap: 7px; } .obj span { color: #c00000; }
.sceneview { width: 904px; }
.sceneview .tab { width: 115px; padding-left: 11px; gap: 8px; } .sceneview .tab.idle { padding-left: 13px; gap: 5px; }
.tab.idle + .ctl { margin-left: auto; }
.sceneview .tabs { padding-right: 18px; }
.scbar { height: 40px; background: #3c0000; padding-left: 9px; overflow: hidden; align-items: flex-start; padding-top: 5px; }
.scbar u { width: 6px; height: 24px; margin: 3px 9px 0 0; border: solid #520000; border-width: 0 1.500px; flex: none; }
.scbar .u2 { margin: 3px 9px 0 9px; } .scbar .u3 { margin: 3px 9px 0 10px; }
.tb { height: 30px; border-radius: 3px; background: #540000; display: flex; align-items: center; justify-content: center; gap: 7px; margin-right: 4px; flex: none; color: #b80000; padding-right: 1px; }
.w119, .w107 { gap: 5px; letter-spacing: .2px; padding-right: 4px; } .w119 .ico:last-child, .w107 .ico:last-child { margin-left: 3px; }
.tb.on { background: #460000; color: #e80000; margin-right: 3px; } .tb.dim { color: #850000; } .tb.mute { color: #8a0000; } .tb.cam { color: #a80000; padding-right: 3px; }
.w119 { width: 119px; } .w107 { width: 107px; } .w33 { width: 33px; } .w20 { width: 20px; } .w20 + .w33 { margin-left: 1px; } .w20 + .w55 { margin-left: 1px; } .w55 { width: 55px; } .u3 + .w55 { margin-left: -2px; } .w48 { width: 48px; } .tb.on.w48 { margin-right: 4px; } .w32 { width: 32px; } .w21 { width: 21px; } .w47 { width: 47px; } .w56 { width: 56px; }
.w55 { padding-right: 4px; }
.tb.w47 { margin-left: 1px; margin-right: 4px; } .globe { width: 44px; justify-content: flex-start; padding-left: 6px; }
.two { font-size: 15px; font-weight: 600; }
.viewport { flex: 1; position: relative; background: #68605b; overflow: hidden; }
.ground { display: block; }
.ax { font: 700 17px Inter, sans-serif; fill: #fff; } .persp { font: 18px Inter, sans-serif; fill: #c4c4c4; letter-spacing: .2px; }
.tools { position: absolute; left: 3px; top: 3px; width: 58px; height: 220px; background: #111; border-radius: 4px; padding: 9px 5px 0; display: flex; flex-direction: column; gap: 2px; }
.tools s { width: 24px; height: 5px; flex: none; margin: 0 12px 10px; border: solid #640000; border-width: 1.500px 0; }
.tool { height: 30px; flex: none; background: #540000; display: flex; align-items: center; justify-content: center; color: #c80000; }
.tool.t-move { background: #460000; color: #f00; } .tool.t-hand { border-radius: 5px 5px 0 0; } .tool.t-combo { border-radius: 0 0 5px 5px; }
.project { width: 1351px; flex: 1; min-height: 0; }
.project .tab { width: 122px; padding-left: 12px; gap: 6px; } .project .tab.idle { padding-left: 15px; gap: 8px; width: 140px; }
.project .tabs { padding-right: 20px; }
.prbar { height: 32px; flex: none; border-bottom: 2px solid #200000; padding-left: 10px; align-items: center; }
.prbar > .ico + .ico { margin: 0 605px 0 6px; } .prbar .field { width: 476px; padding-left: 6px; height: 24px; margin-right: 4px; background: #220000; }
.cell { width: 39px; height: 30px; border-left: 2px solid #260000; display: flex; align-items: center; justify-content: center; }
.cell.dim { color: #820000; } .c5 { flex: 1; color: #600000; gap: 3px; padding-right: 1px; } .c5 span { color: #c80000; }
.prbody { flex: 1; display: flex; min-height: 0; }
aside { width: 224px; border-right: 1px solid #200000; flex: none; margin-top: -1px; padding-top: 0; }
.node { height: 24px; display: flex; align-items: center; color: #c00000; }
.node i { width: 12px; color: #600000; } .l0 i { margin-left: 7px; } .l1 i { margin-left: 28px; } .node em { width: 25px; margin-left: 8px; font-style: normal; } .l0 b { margin-left: 1px; }
.gap { margin-top: 22px; } .node.sel { background: #500000; } .node b { font-weight: 600; letter-spacing: .5px; }
.content { flex: 1; display: flex; flex-direction: column; background: #320000; }
.path { height: 31px; background: #400000; display: flex; align-items: center; padding: 0 0 1px 6px; gap: 9px; color: #b00000; } .path b { font-weight: 600; margin-left: -2px; color: #c80000; letter-spacing: .2px; }
.assets { flex: 1; display: flex; padding: 20px 0 0 14px; }
.asset { width: 114px; display: flex; flex-direction: column; align-items: center; font-size: 15px; letter-spacing: .2px; }
.asset span { margin: 8px 2px 0 0; line-height: 21px; height: 21px; padding: 0 8px; border-radius: 4px; } .asset.sel span { background: #500000; }
.foot { height: 31px; background: #400000; display: flex; align-items: center; padding-left: 8px; gap: 5px; padding-top: 2px; letter-spacing: .12px; }
.slider { width: 82px; height: 2px; background: #680000; margin: -3px 25px 0 auto; display: flex; align-items: center; } .slider i { width: 15px; height: 15px; border-radius: 50%; background: #900000; margin-left: 41px; }
.inspector { flex: 1; }
.inspector .tab { width: 142px; padding-left: 14px; gap: 7px; letter-spacing: .2px; } .inspector .tabs { padding-right: 19px; }
.head { height: 83px; background: #3d0000; border-bottom: 2px solid #200000; display: flex; padding: 11px 10px 0 16px; }
.title { color: #900000; margin: -2px 0 0 17px; letter-spacing: 1.250px; } .hr { margin-left: auto; display: flex; flex-direction: column; align-items: flex-end; } .hr > div { display: flex; gap: 14px; align-items: center; }
button { font: inherit; letter-spacing: inherit; color: #d00000; background: #580000; border: 0; border-bottom: 1px solid #200000; border-radius: 3px; width: 66px; height: 24px; padding: 0; margin-top: 17px; }
.void { flex: 1; } .labels { height: 33px; background: #3d0000; border-top: 2px solid #200000; padding-left: 10px; line-height: 31px; font-weight: 600; letter-spacing: .55px; }
.status { height: 32px; flex: none; background: #191919; border-bottom: 2px solid #29282c; display: flex; align-items: center; color: #ececec; padding: 0 2px 0 4px; } .status > span { margin: -1px 0 0 6px; color: #c8c8c8; }
.sts { margin-left: auto; display: flex; height: 30px; color: #ccc; } .sts div { width: 39px; border-left: 1px solid #272329; display: flex; align-items: center; justify-content: center; }
.taskbar { height: 46px; flex: none; overflow: hidden; display: flex; align-items: flex-start; background: linear-gradient(90deg, #1c1a1f, #1a1838 11%, #1b1834 20%, #191725 30%, #1a171a 45%, #1a1719 68%, #191638 80%, #1a1740 88%, #1b1923 96%); font: 17px/22px "Noto Sans", sans-serif; letter-spacing: -.3px; color: #ccc; }
.taskbar > .ico { margin: 17px 0 0 31px; } .wx { margin: 10px 0 0 13px; width: 100px; line-height: 23px; } .wx + .ico { margin-left: 194px !important; }
.find { width: 330px; height: 60px; margin: 10px 0 0 20px; border-radius: 25px; background: #323038; border-top: 2px solid #443f45; display: flex; padding: 12px 0 0 19px; gap: 15px; font-size: 19px; color: #aaa; }
.apps { display: flex; margin-left: 3px; }
.app { width: 66px; display: flex; justify-content: center; position: relative; padding-top: 16px; height: 60px; }
.app em { position: absolute; width: 23px; height: 23px; left: 36px; top: 9px; border-radius: 50%; background: #3080b4; color: #111; font-style: normal; text-align: center; line-height: 23px; font-size: 16px; } .app-discord em { background: #b04444; color: #ddd; }
.app-sg { background: linear-gradient(#29262d, #29262d) 3px 4px / 60px 60px no-repeat; padding-top: 19px; }
.tray { display: flex; align-items: center; margin: 22px 0 0 101px; height: 24px; } .tray .ico + .ico { margin-left: 12px; } .tray .ico:nth-child(2) { margin-left: 28px !important; }
.clock { text-align: right; margin: 10px 0 0 0; width: 108px; letter-spacing: .25px; line-height: 23px; } .clock + .ico { margin: 22px 0 0 12px !important; }
.tip { position: absolute; left: 1205px; top: 67px; width: 54px; height: 36px; background: #353535; border: 2px solid #1c1c1c; color: #c8c8c8; text-align: center; line-height: 34px; letter-spacing: .1px; }
.dialog { position: absolute; left: 898px; top: 643px; width: 767px; height: 164px; border-radius: 11px; background: #f0f0f0; box-shadow: 0 0 0 1px #55504a, 0 26px 40px 4px rgba(30, 30, 20, .3), 0 2px 10px rgba(0, 0, 0, .3); color: #111; font: 16px/24px "Noto Sans", sans-serif; letter-spacing: -.385px; }
h1 { margin: 0; height: 43px; background: #f3f3f3; border-radius: 11px 11px 0 0; font: 18px/41px "Noto Sans", sans-serif; letter-spacing: -.3px; color: #999; padding-left: 11px; }
.prog { margin: 17px 0 0 11px; width: 740px; height: 21px; background: #e6e6e6; border: 1px solid #bcbcbc; border-left: 0; } .prog i { display: block; width: 30px; height: 19px; background: #0fa82c; }
.dbody { display: flow-root; } p { margin: 12px 0 0 16px; } .p2 { margin-top: 7px; }
</style>
